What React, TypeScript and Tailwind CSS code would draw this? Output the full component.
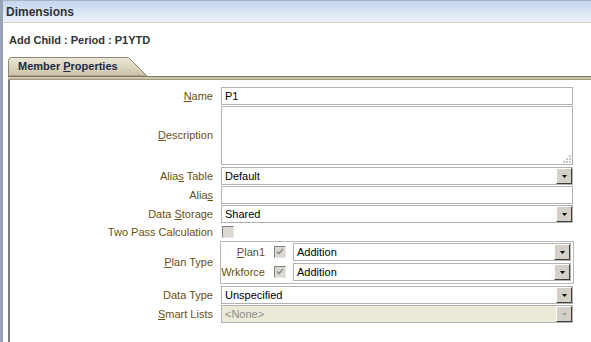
import React from 'react';

const DropBtn = ({ disabled }: { disabled?: boolean }) => (
  <div className="w-[16px] h-[16px] shrink-0 bg-[#d4d0c8] border border-t-white border-l-white border-b-[#404040] border-r-[#404040] flex items-center justify-center">
    <svg width="5" height="3" viewBox="0 0 5 3">
      <path d="M0 0h5L2.5 3z" fill={disabled ? '#a0a0a0' : '#000'} />
    </svg>
  </div>
);

const Select = ({ value, disabled, className = '' }: { value: string; disabled?: boolean; className?: string }) => (
  <div
    className={`h-[18px] border border-[#b2b2b2] flex items-center justify-between ${disabled ? 'bg-[#ebe9d8] text-[#8c8c8c]' : 'bg-white text-black'} ${className}`}
  >
    <span className="pl-[3px] leading-none">{value}</span>
    <DropBtn disabled={disabled} />
  </div>
);

const TextBox = ({ value = '' }: { value?: string }) => (
  <div className="w-[352px] h-[18px] border border-[#b2b2b2] bg-white flex items-center pl-[3px] text-black">{value}</div>
);

const CheckBox = ({ checked }: { checked?: boolean }) => (
  <div className="w-[12px] h-[12px] shrink-0 border border-t-[#808080] border-l-[#808080] border-b-[#e8e6e0] border-r-[#e8e6e0] bg-[#dcd9d2] flex items-center justify-center">
    {checked && (
      <svg width="8" height="8" viewBox="0 0 8 8">
        <path d="M1 3.5l2 2 4-4.5" stroke="#8f8f8f" strokeWidth="1.6" fill="none" />
      </svg>
    )}
  </div>
);

const Label = ({ children }: { children: React.ReactNode }) => (
  <div className="w-[203px] shrink-0 text-right text-[#6a4f12]">{children}</div>
);

const App = () => {
  return (
    <div className="w-[591px] h-[342px] overflow-hidden bg-white flex font-['Liberation_Sans',Arial,sans-serif] text-[11px]">
      <div className="w-[3px] shrink-0 bg-[#98a4b6]" />
      <div className="flex-1 flex flex-col min-w-0">
        <div className="h-[23px] shrink-0 border-t border-t-[#a9b3c2] border-b border-b-[#d6d2c0] bg-gradient-to-b from-[#c4d5ee] to-[#eef3fb] flex items-center pl-[3px] text-[12px] font-bold text-[#333]">
          Dimensions
        </div>

        <div className="h-[34px] shrink-0 flex items-center pl-[6px] font-bold text-[#333]">
          Add Child : Period : P1YTD
        </div>

        {/* tab */}
        <div className="pl-[5px] h-[19px] shrink-0 flex">
          <div className="relative w-[140px] h-[19px] flex items-center pl-[10px] font-bold text-[#1c2c44]">
            <svg className="absolute inset-0" width="140" height="19" viewBox="0 0 140 19">
              <defs>
                <linearGradient id="tabg" x1="0" y1="0" x2="0" y2="1">
                  <stop offset="0" stopColor="#ebe7d8" />
                  <stop offset="1" stopColor="#cbc3a6" />
                </linearGradient>
              </defs>
              <path d="M0.5 19V3.5Q0.5 0.5 3.5 0.5H120.5L139 19Z" fill="url(#tabg)" stroke="#8d8874" />
            </svg>
            <span className="relative">
              Member <span className="underline">P</span>roperties
            </span>
          </div>
        </div>
        <div className="ml-[5px] h-[4px] shrink-0 border-t border-t-[#7e7b6e] bg-[#cdc5a6] border-b border-b-[#a39b80]" />

        {/* panel */}
        <div className="ml-[5px] flex-1 border-l-2 border-l-[#7a7a7a] pt-[7px] flex flex-col">
          <div className="flex items-center h-[18px]">
            <Label>
              <span className="underline">N</span>ame
            </Label>
            <div className="ml-[8px]">
              <TextBox value="P1" />
            </div>
          </div>

          <div className="flex items-center h-[59px] mt-[1px]">
            <Label>
              <span className="underline">D</span>escription
            </Label>
            <div className="ml-[8px] relative w-[352px] h-[59px] border border-[#b2b2b2] bg-white">
              <svg className="absolute right-[1px] bottom-[1px]" width="8" height="8" viewBox="0 0 8 8">
                <g fill="#c4c4c4">
                  <rect x="6" y="0" width="2" height="2" />
                  <rect x="3" y="3" width="2" height="2" />
                  <rect x="6" y="3" width="2" height="2" />
                  <rect x="0" y="6" width="2" height="2" />
                  <rect x="3" y="6" width="2" height="2" />
                  <rect x="6" y="6" width="2" height="2" />
                </g>
              </svg>
            </div>
          </div>

          <div className="flex items-center h-[18px] mt-[2px]">
            <Label>
              Alia<span className="underline">s</span> Table
            </Label>
            <Select value="Default" className="ml-[8px] w-[352px]" />
          </div>

          <div className="flex items-center h-[18px] mt-[1px]">
            <Label>
              Alia<span className="underline">s</span>
            </Label>
            <div className="ml-[8px]">
              <TextBox />
            </div>
          </div>

          <div className="flex items-center h-[18px] mt-[1px]">
            <Label>
              Data <span className="underline">S</span>torage
            </Label>
            <Select value="Shared" className="ml-[8px] w-[352px]" />
          </div>

          <div className="flex items-center h-[16px] mt-[1px]">
            <Label>Two Pass Calculation</Label>
            <div className="ml-[9px]">
              <CheckBox />
            </div>
          </div>

          <div className="flex items-center mt-[1px]">
            <Label>
              <span className="underline">P</span>lan Type
            </Label>
            <div className="ml-[7px] w-[354px] h-[43px] border border-[#b8b8b8] pt-[1px] pr-[2px] flex flex-col gap-[2px]">
              <div className="flex items-center h-[18px]">
                <div className="w-[44px] text-right text-[#6a4f12]">
                  <span className="underline">P</span>lan1
                </div>
                <div className="ml-[9px]">
                  <CheckBox checked />
                </div>
                <Select value="Addition" className="ml-[7px] flex-1" />
              </div>
              <div className="flex items-center h-[18px]">
                <div className="w-[44px] text-right text-[#6a4f12]">Wrkforce</div>
                <div className="ml-[9px]">
                  <CheckBox checked />
                </div>
                <Select value="Addition" className="ml-[7px] flex-1" />
              </div>
            </div>
          </div>

          <div className="flex items-center h-[18px] mt-[2px]">
            <Label>Data Type</Label>
            <Select value="Unspecified" className="ml-[8px] w-[352px]" />
          </div>

          <div className="flex items-center h-[18px] mt-[1px]">
            <Label>
              <span className="underline">S</span>mart Lists
            </Label>
            <Select value="<None>" disabled className="ml-[8px] w-[352px]" />
          </div>
        </div>
      </div>
    </div>
  );
};

export default App;
